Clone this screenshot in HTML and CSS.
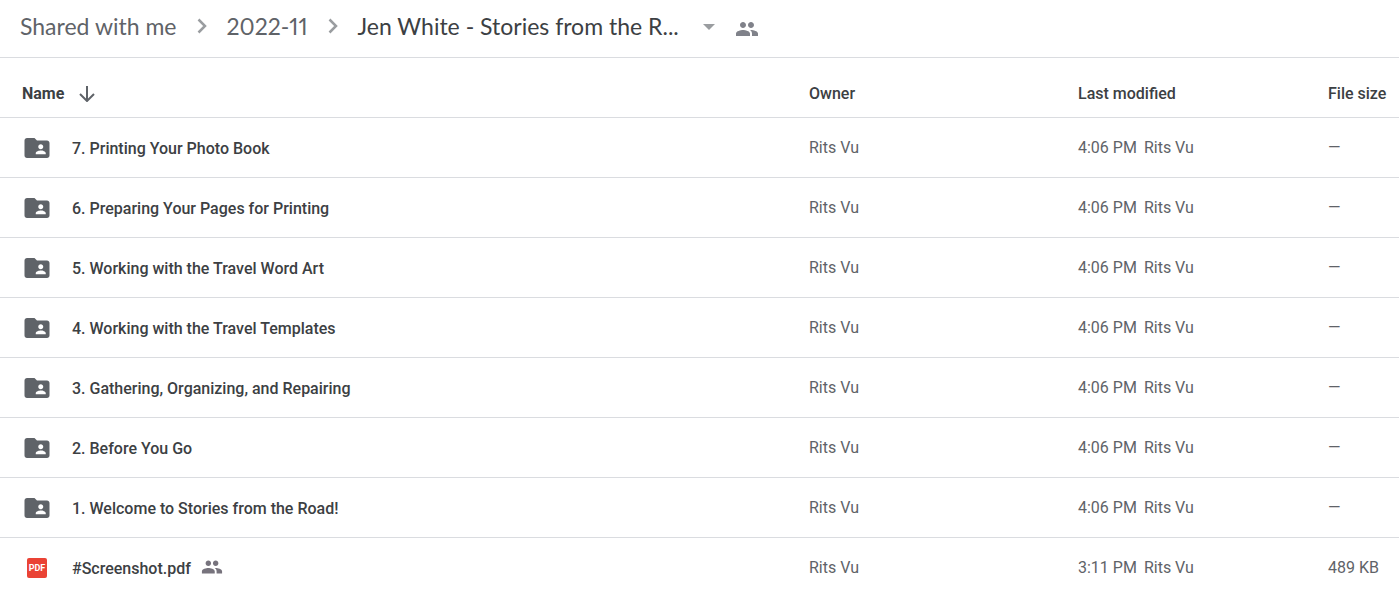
FILE: index.html
```html
<!DOCTYPE html>
<html lang="en">
<head>
<meta charset="utf-8">
<meta name="viewport" content="width=device-width, initial-scale=1">
<title>Jen White - Stories from the Road</title>
<link rel="stylesheet" href="styles.css">
</head>
<body>
<svg class="defs" aria-hidden="true">
  <symbol id="folder" viewBox="0 0 24 24"><path d="M20 6h-8l-2-2H4c-1.100 0-2 .9-2 2v12c0 1.100.9 2 2 2h16c1.100 0 2-.9 2-2V8c0-1.100-.9-2-2-2zm-5 3c1.100 0 2 .9 2 2s-.9 2-2 2-2-.9-2-2 .9-2 2-2zm4 8h-8v-1c0-1.330 2.670-2 4-2s4 .67 4 2v1z"/></symbol>
  <symbol id="people" viewBox="0 0 24 24"><path d="M16 11c1.660 0 2.990-1.340 2.990-3S17.660 5 16 5s-3 1.340-3 3 1.340 3 3 3zm-8 0c1.660 0 2.990-1.340 2.990-3S9.660 5 8 5 5 6.340 5 8s1.340 3 3 3zm0 2c-2.330 0-7 1.170-7 3.500V19h14v-2.500c0-2.330-4.670-3.500-7-3.500zm8 0c-.29 0-.62.02-.97.05 1.160.84 1.970 1.970 1.970 3.450V19h6v-2.500c0-2.330-4.670-3.500-7-3.500z"/></symbol>
  <symbol id="chevron" viewBox="0 0 10 16"><path d="M1.500 1.500 8 8l-6.500 6.500"/></symbol>
</svg>
<nav class="crumbs" aria-label="Folder path">
  <a class="crumb" href="#">Shared with me</a>
  <svg class="chevron" aria-hidden="true"><use href="#chevron"/></svg>
  <a class="crumb" href="#">2022-11</a>
  <svg class="chevron" aria-hidden="true"><use href="#chevron"/></svg>
  <button class="current" type="button">Jen White - Stories from the R...<svg class="caret" viewBox="0 0 12 6" aria-hidden="true"><path d="M0 0h12L6 6z"/></svg></button>
  <button class="share" type="button" aria-label="Shared with people"><svg class="share-icon"><use href="#people"/></svg></button>
</nav>
<table class="files">
  <thead>
    <tr>
      <th class="name" scope="col"><button class="sort" type="button">Name<svg class="arrow" viewBox="0 0 16 16" aria-hidden="true"><path d="M8 0v14.500M1 8l7 7 7-7"/></svg></button></th>
      <th class="owner" scope="col">Owner</th>
      <th class="modified" scope="col">Last modified</th>
      <th class="size" scope="col">File size</th>
    </tr>
  </thead>
  <tbody>
    <tr><td><div class="file"><svg class="folder" aria-hidden="true"><use href="#folder"/></svg><span>7. Printing Your Photo Book</span></div></td><td>Rits Vu</td><td><div class="when"><span>4:06 PM</span><span>Rits Vu</span></div></td><td>—</td></tr>
    <tr><td><div class="file"><svg class="folder" aria-hidden="true"><use href="#folder"/></svg><span>6. Preparing Your Pages for Printing</span></div></td><td>Rits Vu</td><td><div class="when"><span>4:06 PM</span><span>Rits Vu</span></div></td><td>—</td></tr>
    <tr><td><div class="file"><svg class="folder" aria-hidden="true"><use href="#folder"/></svg><span>5. Working with the Travel Word Art</span></div></td><td>Rits Vu</td><td><div class="when"><span>4:06 PM</span><span>Rits Vu</span></div></td><td>—</td></tr>
    <tr><td><div class="file"><svg class="folder" aria-hidden="true"><use href="#folder"/></svg><span>4. Working with the Travel Templates</span></div></td><td>Rits Vu</td><td><div class="when"><span>4:06 PM</span><span>Rits Vu</span></div></td><td>—</td></tr>
    <tr><td><div class="file"><svg class="folder" aria-hidden="true"><use href="#folder"/></svg><span>3. Gathering, Organizing, and Repairing</span></div></td><td>Rits Vu</td><td><div class="when"><span>4:06 PM</span><span>Rits Vu</span></div></td><td>—</td></tr>
    <tr><td><div class="file"><svg class="folder" aria-hidden="true"><use href="#folder"/></svg><span>2. Before You Go</span></div></td><td>Rits Vu</td><td><div class="when"><span>4:06 PM</span><span>Rits Vu</span></div></td><td>—</td></tr>
    <tr><td><div class="file"><svg class="folder" aria-hidden="true"><use href="#folder"/></svg><span>1. Welcome to Stories from the Road!</span></div></td><td>Rits Vu</td><td><div class="when"><span>4:06 PM</span><span>Rits Vu</span></div></td><td>—</td></tr>
    <tr><td><div class="file"><span class="pdf">PDF</span><span>#Screenshot.pdf</span><svg class="shared" role="img" aria-label="Shared"><use href="#people"/></svg></div></td><td>Rits Vu</td><td><div class="when"><span>3:11 PM</span><span>Rits Vu</span></div></td><td>489 KB</td></tr>
  </tbody>
</table>
</body>
</html>
```

FILE: styles.css
```css
body {
  margin: 0;
  background: #fff;
  color: #5f6368;
  font: 16px/20px Roboto, "Liberation Sans", sans-serif;
}
button {
  margin: 0;
  padding: 0;
  border: 0;
  background: none;
  font: inherit;
  color: inherit;
  cursor: pointer;
}
svg { flex: none; fill: currentColor; }
.defs { display: none; }

.crumbs {
  display: flex;
  align-items: center;
  gap: 20px;
  box-sizing: border-box;
  min-height: 58px;
  padding: 0 20px 5px;
  border-bottom: 1px solid #dadce0;
  font: 23px/28px Lato, Roboto, sans-serif;
  font-variant-numeric: proportional-nums;
  white-space: nowrap;
}
.crumb { color: inherit; text-decoration: none; }
.chevron {
  width: 10px;
  height: 16px;
  fill: none;
  stroke: #9a9da0;
  stroke-width: 2.5;
}
.current {
  display: flex;
  align-items: center;
  gap: 24px;
  color: #3c4043;
  font-variant-numeric: inherit;
}
.caret { width: 12px; height: 6px; margin-top: 2px; color: #9a9da0; }
.share { display: flex; padding-top: 5px; color: #80828a; }
.share-icon { width: 24px; height: 24px; }

.files {
  width: 100%;
  table-layout: fixed;
  border-collapse: separate;
  border-spacing: 0;
}
.files th,
.files td {
  box-sizing: border-box;
  height: 60px;
  padding: 0;
  border-bottom: 1px solid #dadce0;
  text-align: left;
  vertical-align: middle;
}
.files th { padding-top: 12px; color: #3c4043; font-weight: 500; }
.files .name { padding-left: 22px; font-weight: 700; }
.owner { width: 269px; }
.modified { width: 250px; }
.size { width: 71px; }
.sort { display: flex; align-items: center; gap: 15px; }
.arrow {
  width: 16px;
  height: 16px;
  fill: none;
  stroke: #5f6368;
  stroke-width: 2;
}
.file {
  display: flex;
  align-items: center;
  padding: 2px 0 0 22px;
  color: #3c4043;
  font-weight: 500;
}
.folder { width: 30px; height: 30px; margin: 0 20px 2px 0; color: #5f6368; }
.pdf {
  flex: none;
  width: 20px;
  margin: 0 25px 2px 5px;
  border-radius: 2px;
  background: #ea4335;
  color: #fff;
  font-size: 9px;
  font-weight: 700;
  text-align: center;
}
.shared { width: 22px; height: 22px; margin: 0 0 4px 10px; color: #77737d; }
.when { display: flex; gap: 7px; }
```
